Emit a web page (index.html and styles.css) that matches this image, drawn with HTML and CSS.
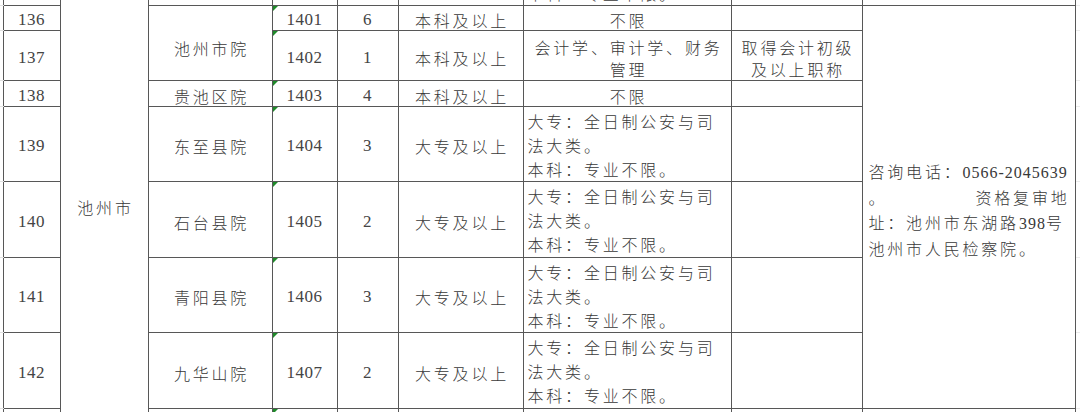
FILE: index.html
```html
<!DOCTYPE html>
<html lang="zh-CN">
<head>
<meta charset="utf-8">
<title>池州市职位表</title>
<link rel="stylesheet" href="styles.css">
</head>
<body>
<div class="sheet">
<table class="grid">
  <colgroup>
    <col class="w-el"><col class="w-1"><col class="w-2"><col class="w-3"><col class="w-4">
    <col class="w-5"><col class="w-6"><col class="w-7"><col class="w-8"><col class="w-9"><col class="w-er">
  </colgroup>
  <tr class="r75">
    <td class="el"></td><td class="num"></td><td></td><td></td><td class="num"></td>
    <td class="num"></td><td></td>
    <td class="major">大专：全日制公安与司<br>法大类。<br>本科：专业不限。</td>
    <td></td><td></td><td class="er"></td>
  </tr>
  <tr class="r25">
    <td class="el"></td><td class="num">136</td>
    <td rowspan="7" class="city">池州市</td>
    <td rowspan="2" class="unit-top">池州市院</td>
    <td class="num txt">1401</td><td class="num">6</td><td>本科及以上</td><td>不限</td><td></td>
    <td rowspan="7" class="contact">
      <div class="ln">咨询电话：<span class="d">0566-2045639</span></div>
      <div class="ln split"><span>。</span><span>资格复审地</span></div>
      <div class="ln">址：池州市东湖路<span class="d">398</span>号</div>
      <div class="ln">池州市人民检察院。</div>
    </td>
    <td class="er"></td>
  </tr>
  <tr class="r50">
    <td class="el"></td><td class="num">137</td>
    <td class="num txt">1402</td><td class="num">1</td><td>本科及以上</td>
    <td class="two">会计学、审计学、财务<br>管理</td>
    <td class="two">取得会计初级<br>及以上职称</td>
    <td class="er"></td>
  </tr>
  <tr class="r26">
    <td class="el"></td><td class="num">138</td><td>贵池区院</td>
    <td class="num txt">1403</td><td class="num">4</td><td>本科及以上</td><td>不限</td><td></td>
    <td class="er"></td>
  </tr>
  <tr class="r75">
    <td class="el"></td><td class="num">139</td><td>东至县院</td>
    <td class="num txt">1404</td><td class="num">3</td><td>大专及以上</td>
    <td class="major">大专：全日制公安与司<br>法大类。<br>本科：专业不限。</td><td></td>
    <td class="er"></td>
  </tr>
  <tr class="r76">
    <td class="el"></td><td class="num">140</td><td>石台县院</td>
    <td class="num txt">1405</td><td class="num">2</td><td>大专及以上</td>
    <td class="major">大专：全日制公安与司<br>法大类。<br>本科：专业不限。</td><td></td>
    <td class="er"></td>
  </tr>
  <tr class="r75">
    <td class="el"></td><td class="num">141</td><td>青阳县院</td>
    <td class="num txt">1406</td><td class="num">3</td><td>大专及以上</td>
    <td class="major">大专：全日制公安与司<br>法大类。<br>本科：专业不限。</td><td></td>
    <td class="er"></td>
  </tr>
  <tr class="r76">
    <td class="el"></td><td class="num">142</td><td>九华山院</td>
    <td class="num txt">1407</td><td class="num">2</td><td>大专及以上</td>
    <td class="major">大专：全日制公安与司<br>法大类。<br>本科：专业不限。</td><td></td>
    <td class="er"></td>
  </tr>
  <tr class="r40">
    <td class="el"></td><td class="num"></td><td></td><td></td>
    <td class="num txt"></td><td class="num"></td><td></td><td></td><td></td><td></td>
    <td class="er"></td>
  </tr>
</table>
</div>
</body>
</html>
```

FILE: styles.css
```css
html, body {
  margin: 0;
  padding: 0;
  background: #ffffff;
}

.sheet {
  width: 1080px;
  height: 412px;
  overflow: hidden;
}

.grid {
  border-collapse: collapse;
  table-layout: fixed;
  width: 1080px;
  margin-top: -70px;
  font-family: "Noto Sans CJK SC", "Noto Sans", sans-serif;
  font-size: 16px;
  font-weight: 300;
  color: #383838;
}

.w-el { width: 3px; }
.w-1 { width: 57px; }
.w-2 { width: 88px; }
.w-3 { width: 124px; }
.w-4 { width: 65px; }
.w-5 { width: 61px; }
.w-6 { width: 125px; }
.w-7 { width: 208px; }
.w-8 { width: 131px; }
.w-9 { width: 213px; }
.w-er { width: 5px; }

.r25 { height: 25px; }
.r26 { height: 26px; }
.r40 { height: 40px; }
.r50 { height: 50px; }
.r75 { height: 75px; }
.r76 { height: 76px; }

.grid td {
  border: 1px solid #575757;
  padding: 4px 0 0 3px;
  text-align: center;
  vertical-align: middle;
  letter-spacing: 2.8px;
  line-height: 20px;
  white-space: nowrap;
  overflow: hidden;
}

.grid td.el {
  border-left: none;
  border-right: none;
  border-top: 1px solid #e2e2e2;
  border-bottom: 1px solid #e2e2e2;
  padding: 0;
}

.grid td.er {
  border-left: none;
  border-right: none;
  border-top: 1px solid #ececec;
  border-bottom: 1px solid #ececec;
  padding: 0;
}

.grid td.num {
  font-family: "Liberation Serif", "Times New Roman", serif;
  font-size: 17px;
  font-weight: 400;
  color: #444444;
  letter-spacing: 0.5px;
  padding-left: 0;
}

.grid td.txt {
  position: relative;
}

.grid td.txt::before {
  content: "";
  position: absolute;
  top: 0;
  left: 0;
  width: 0;
  height: 0;
  border-top: 5px solid #1f8a2a;
  border-right: 5px solid transparent;
}

.grid td.city {
  border-top-style: hidden;
  border-bottom-style: hidden;
  padding-top: 0;
}

.grid td.unit-top {
  padding-top: 9px;
}

.grid td.two {
  line-height: 22px;
  padding-top: 5px;
}

.grid td.major {
  text-align: left;
  line-height: 24px;
  padding: 2px 0 0 4px;
  vertical-align: top;
}

.grid td.contact {
  text-align: left;
  vertical-align: middle;
  padding: 5px 5px 0 6px;
  line-height: 25px;
}

.ln {
  white-space: nowrap;
}

.split {
  display: flex;
  justify-content: space-between;
}

.d {
  font-family: "Liberation Serif", "Times New Roman", serif;
  font-size: 16px;
  font-weight: 400;
  letter-spacing: 1px;
}
```
